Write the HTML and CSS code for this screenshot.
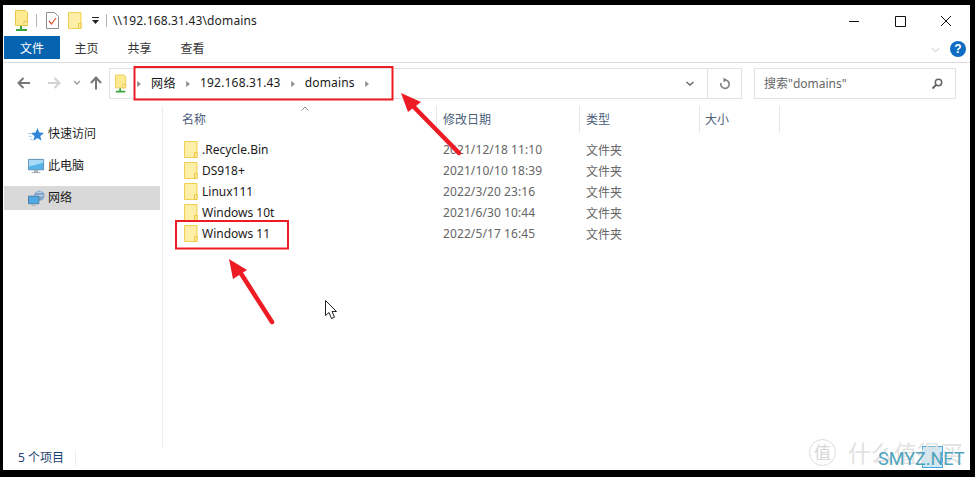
FILE: index.html
```html
<!DOCTYPE html>
<html lang="zh">
<head>
<meta charset="utf-8">
<title>domains</title>
<link rel="stylesheet" href="styles.css">
</head>
<body>
<svg width="0" height="0" class="defs">
  <defs>
    <symbol id="folder" viewBox="0 0 14 17">
      <path d="M.5.5h12.5v16H.5z" fill="#fde98f" stroke="#f0cf52"/>
      <path d="M1 1h11v15H1z" fill="#fdeea8"/>
      <path d="M10.5 16.5v-5h2.500v5z" fill="#fdeea8" stroke="#ecc63e"/>
    </symbol>
    <symbol id="netdrive" viewBox="0 0 14 22">
      <path d="M.5.5h10l2 2v13H.5z" fill="#fde98f" stroke="#e9c848"/>
      <path d="M9 11.500h3.500v4H9z" fill="#fdeea8" stroke="#e9c848"/>
      <path d="M6 16v3M1 20h11" stroke="#3aa53a" stroke-width="2" fill="none"/>
    </symbol>
    <symbol id="chev" viewBox="0 0 4 6">
      <path d="M.5.5L3.500 3 .5 5.500z" fill="#8a8a8a" stroke="#8a8a8a" stroke-width=".6"/>
    </symbol>
  </defs>
</svg>
<div class="window">
  <header class="titlebar">
    <svg class="qa-drive"><use href="#netdrive"/></svg>
    <span class="qa-sep"></span>
    <svg class="qa-prop" viewBox="0 0 13 17">
      <path d="M.5.500h8l4 4v12H.5z" fill="#fff" stroke="#8d8d8d"/>
      <path d="M3 9l2.500 3L10 6" fill="none" stroke="#d9532c" stroke-width="1.200"/>
    </svg>
    <svg class="qa-folder"><use href="#folder"/></svg>
    <svg class="qa-drop" viewBox="0 0 9 8"><path d="M1 .5h7" stroke="#222"/><path d="M1 3h7L4.500 7z" fill="#222"/></svg>
    <span class="qa-sep qa-sep-2"></span>
    <span class="title-text">\\192.168.31.43\domains</span>
    <span class="win-btns">
      <svg class="win-btn" viewBox="0 0 46 30"><path d="M18 15.500h10" stroke="#111"/></svg>
      <svg class="win-btn" viewBox="0 0 46 30"><path d="M18.500 10.500h10v10h-10z" stroke="#111" fill="none"/></svg>
      <svg class="win-btn" viewBox="0 0 46 30"><path d="M18 10l10 10M28 10L18 20" stroke="#111" fill="none"/></svg>
    </span>
  </header>

  <nav class="ribbon">
    <span class="tab tab-file">文件</span>
    <span class="tab">主页</span>
    <span class="tab">共享</span>
    <span class="tab">查看</span>
    <svg class="ribbon-chev" viewBox="0 0 10 6"><path d="M1 1l4 4 4-4" fill="none" stroke="#b8b8b8"/></svg>
    <span class="help">?</span>
  </nav>

  <div class="addressrow">
    <svg class="nav-arrow" viewBox="0 0 14 12"><path d="M13 6H2M6.500 1L1.500 6l5 5" fill="none" stroke="#777" stroke-width="2"/></svg>
    <svg class="nav-arrow nav-fwd" viewBox="0 0 14 12"><path d="M1 6h11M7.500 1l5 5-5 5" fill="none" stroke="#d2d2d2" stroke-width="2"/></svg>
    <svg class="nav-drop" viewBox="0 0 8 5"><path d="M1 1l3 3 3-3" fill="none" stroke="#9a9a9a" stroke-width="1.300"/></svg>
    <svg class="nav-up" viewBox="0 0 12 14"><path d="M6 13.500V2M1 7l5-5.500L11 7" fill="none" stroke="#777" stroke-width="2"/></svg>
    <div class="addressbar">
      <svg class="addr-drive"><use href="#netdrive"/></svg>
      <svg class="crumb-sep"><use href="#chev"/></svg>
      <span class="crumb crumb-cjk">网络</span>
      <svg class="crumb-sep"><use href="#chev"/></svg>
      <span class="crumb">192.168.31.43</span>
      <svg class="crumb-sep"><use href="#chev"/></svg>
      <span class="crumb">domains</span>
      <svg class="crumb-sep"><use href="#chev"/></svg>
      <span class="addr-spacer"></span>
      <svg class="addr-drop" viewBox="0 0 8 5"><path d="M.5 1l3.500 3 3.500-3" fill="none" stroke="#666" stroke-width="1.400"/></svg>
      <span class="addr-refresh">
        <svg class="refresh-icon" viewBox="0 0 12 13"><path d="M6 3a4.200 4.200 0 1 1-4 3" fill="none" stroke="#808080" stroke-width="1.600"/><path d="M4.500 .5L8 3 4.500 5.500z" fill="#808080"/></svg>
      </span>
    </div>
    <div class="searchbar">
      <span class="search-text">搜索"domains"</span>
      <svg class="search-icon" viewBox="0 0 12 12"><circle cx="7.500" cy="4.500" r="3.200" fill="none" stroke="#666" stroke-width="1.500"/><path d="M5 7l-3.500 3.500" stroke="#666" stroke-width="2"/></svg>
    </div>
  </div>

  <div class="main">
    <aside class="sidebar">
      <div class="side-item">
        <svg class="side-icon" viewBox="0 0 18 18"><path d="M10 2l2 5 5 .3-4 3.300 1.300 5L10 12.800 5.700 15.600 7 10.600 3 7.300l5-.3z" fill="#2f86d8"/><path d="M0 8h4M1 11h3M2 14h3" stroke="#9cc8ee"/></svg>
        <span class="side-label">快速访问</span>
      </div>
      <div class="side-item">
        <svg class="side-icon" viewBox="0 0 18 18"><path d="M.5 1.500h16v11H.5z" fill="#55b4ea" stroke="#5f8fb5"/><path d="M1 2h15v3L1 9z" fill="#a8dcf6"/><path d="M7 13h3v2H7zM4 15.500h9" stroke="#99a4ad" fill="#c5ccd2"/></svg>
        <span class="side-label">此电脑</span>
      </div>
      <div class="side-item side-active">
        <svg class="side-icon" viewBox="0 0 18 18"><circle cx="12" cy="6" r="5.500" fill="#7fa6c8"/><path d="M9 2q3 1 6 0M8 6h8" stroke="#dfe9f2" fill="none"/><path d="M.5 6.500h11v8H.5z" fill="#4ea9e4" stroke="#4d7ea6"/><path d="M4 15.500h4v1.500H4z" fill="#aab4bc"/></svg>
        <span class="side-label">网络</span>
      </div>
    </aside>

    <section class="files">
      <div class="file-head">
        <span class="col col-name">名称</span>
        <span class="col col-date">修改日期</span>
        <span class="col col-type">类型</span>
        <span class="col col-size">大小</span>
        <svg class="sort-caret" viewBox="0 0 8 5"><path d="M.5 4.500L4 1l3.500 3.500" fill="none" stroke="#8a8a8a"/></svg>
      </div>
      <div class="file-row">
        <span class="cell-name"><svg class="file-icon"><use href="#folder"/></svg>.Recycle.Bin</span>
        <span class="cell-date">2021/12/18 11:10</span>
        <span class="cell-type">文件夹</span>
      </div>
      <div class="file-row">
        <span class="cell-name"><svg class="file-icon"><use href="#folder"/></svg>DS918+</span>
        <span class="cell-date">2021/10/10 18:39</span>
        <span class="cell-type">文件夹</span>
      </div>
      <div class="file-row">
        <span class="cell-name"><svg class="file-icon"><use href="#folder"/></svg>Linux111</span>
        <span class="cell-date">2022/3/20 23:16</span>
        <span class="cell-type">文件夹</span>
      </div>
      <div class="file-row">
        <span class="cell-name"><svg class="file-icon"><use href="#folder"/></svg>Windows 10t</span>
        <span class="cell-date">2021/6/30 10:44</span>
        <span class="cell-type">文件夹</span>
      </div>
      <div class="file-row">
        <span class="cell-name"><svg class="file-icon"><use href="#folder"/></svg>Windows 11</span>
        <span class="cell-date">2022/5/17 16:45</span>
        <span class="cell-type">文件夹</span>
      </div>
    </section>
  </div>

  <footer class="statusbar"><span class="status-text">5 个项目</span></footer>
</div>

<svg class="annotations" viewBox="0 0 975 477">
  <rect x="134.500" y="67" width="258" height="32.500" fill="none" stroke="#ed1c24" stroke-width="2"/>
  <rect x="176" y="221" width="112" height="27.500" fill="none" stroke="#ed1c24" stroke-width="2"/>
  <path d="M459 153L411 104" stroke="#ed1c24" stroke-width="4.500" stroke-linecap="round"/>
  <path d="M401 93L421 102 408 112z" fill="#ed1c24"/>
  <path d="M272 322L240 272" stroke="#ed1c24" stroke-width="4.500" stroke-linecap="round"/>
  <path d="M229 259L247 270 233 279z" fill="#ed1c24"/>
  <path d="M325.500 300.500v15l3.500-3 2.500 6 3-1.300-2.500-5.700h4.500z" fill="#fff" stroke="#222"/>
</svg>

<div class="watermark">
  <span class="wm-select"></span>
  <span class="wm-circle">值</span>
  <span class="wm-cn">什么值得买</span>
  <span class="wm-en">SMYZ.NET</span>
</div>
</body>
</html>
```

FILE: styles.css
```css
* { box-sizing: border-box; }
html, body { margin: 0; padding: 0; width: 975px; height: 477px; overflow: hidden; background: #000; }
body {
  position: relative;
  padding: 5px 5px 7px 3px;
  font-family: "Noto Sans", "Noto Sans CJK SC", sans-serif;
  font-size: 12px;
  color: #1a1a1a;
}
.defs { position: absolute; }
.window { width: 967px; height: 465px; background: #fff; display: flex; flex-direction: column; }

.titlebar { height: 31px; display: flex; align-items: center; padding-left: 12px; flex: none; }
.qa-drive { width: 14px; height: 22px; }
.qa-sep { width: 1px; height: 13px; background: #b5b5b5; margin-left: 7px; }
.qa-prop { width: 13px; height: 17px; margin-left: 9px; }
.qa-folder { width: 14px; height: 17px; margin-left: 9px; }
.qa-drop { width: 9px; height: 8px; margin-left: 9px; }
.qa-sep-2 { margin-left: 6px; }
.title-text { margin-left: 6px; font-size: 12px; color: #222; letter-spacing: .15px; }
.win-btns { margin-left: auto; display: flex; margin-right: 1px; }
.win-btn { width: 46px; height: 30px; }

.ribbon { flex: none; display: flex; align-items: flex-start; padding-left: 1px; border-bottom: 1px solid #dcdcdc; height: 27px; }
.tab { width: 53px; height: 23px; display: flex; align-items: center; justify-content: center; color: #333; }
.tab-file { width: 56px; background: #0563af; color: #fff; }
.ribbon-chev { width: 9px; height: 6px; margin: 11px 0 0 auto; }
.help { width: 16px; height: 16px; border-radius: 50%; background: #0f6cc4; color: #fff; font-weight: 700; font-size: 12px; line-height: 16px; text-align: center; margin: 5px 4px 0 10px; font-family: "Liberation Sans", sans-serif; }

.addressrow { height: 43px; flex: none; display: flex; align-items: flex-start; padding-top: 5px; }
.nav-arrow { width: 14px; height: 12px; margin: 9px 0 0 14px; flex: none; }
.nav-fwd { margin-left: 16px; }
.nav-drop { width: 8px; height: 5px; margin: 12px 0 0 12px; flex: none; }
.nav-up { width: 12px; height: 14px; margin: 8px 0 0 9px; flex: none; }
.addressbar { width: 633px; height: 31px; margin-left: 7px; border: 1px solid #e1e1e1; display: flex; align-items: center; padding-left: 5px; flex: none; }
.addr-drive { width: 12px; height: 20px; flex: none; }
.crumb { color: #1a1a1a; letter-spacing: .18px; margin-bottom: 2px; }
.crumb-cjk { letter-spacing: .5px; }
.crumb-sep { width: 4px; height: 6px; margin: 0 10px; flex: none; }
.addr-spacer { flex: 1; }
.addr-drop { width: 8px; height: 5px; margin-right: 13px; }
.addr-refresh { width: 34px; height: 29px; border-left: 1px solid #e1e1e1; display: flex; align-items: center; justify-content: center; }
.refresh-icon { width: 12px; height: 13px; }
.searchbar { width: 202px; height: 31px; margin-left: 12px; border: 1px solid #e1e1e1; display: flex; align-items: center; padding: 0 12px 0 9px; justify-content: space-between; flex: none; }
.search-text { color: #666; margin-bottom: 2px; }
.search-icon { width: 12px; height: 12px; }

.main { flex: 1; display: flex; min-height: 0; }
.sidebar { width: 159px; flex: none; padding-top: 16px; display: flex; flex-direction: column; gap: 8px; padding-left: 1px; }
.side-item { height: 24px; display: flex; align-items: center; padding-left: 24px; gap: 3px; color: #1a1a1a; width: 156px; }
.side-label { margin-bottom: 2px; }
.side-icon { width: 17px; height: 17px; flex: none; }
.side-active { background: #d9d9d9; }
.files { flex: 1; border-left: 1px solid #ededed; display: flex; flex-direction: column; }

.file-head { height: 27px; display: flex; position: relative; flex: none; margin-bottom: 6px; }
.col { height: 100%; display: flex; align-items: center; color: #4c607a; padding: 0 0 2px 6px; border-right: 1px solid #e8e8e8; }
.col-name { width: 274px; padding-left: 19px; }
.col-date { width: 143px; }
.col-type { width: 120px; }
.col-size { width: 80px; padding-left: 5px; }
.sort-caret { position: absolute; left: 138px; top: 0; width: 8px; height: 5px; }

.file-row { height: 21px; display: flex; align-items: center; flex: none; color: #666; }
.cell-name { width: 280px; padding-left: 21px; display: flex; align-items: center; color: #1a1a1a; }
.file-icon { width: 14px; height: 17px; margin-right: 4px; flex: none; }
.cell-date { width: 143px; letter-spacing: .1px; }
.cell-type { width: 100px; }

.statusbar { height: 23px; flex: none; display: flex; align-items: center; padding: 0 0 2px 15px; }
.status-text { color: #1c3f6e; padding-right: 11px; border-right: 1px solid #eee; line-height: 16px; }

.annotations { position: absolute; left: 0; top: 0; width: 975px; height: 477px; pointer-events: none; }

.wm-select { position: absolute; left: 922px; top: 446px; width: 21px; height: 22px; background: #cfe8f5; border: 1px solid #4aa6d8; }
.wm-circle { position: absolute; left: 809px; top: 439px; width: 27px; height: 27px; border: 1px solid #dcdcdc; border-radius: 50%; color: #d6d6d6; font-size: 17px; line-height: 24px; text-align: center; font-family: "Noto Sans CJK SC", sans-serif; }
.wm-cn { position: absolute; left: 848px; top: 437px; color: #e2e2e2; font-size: 23px; line-height: 30px; white-space: nowrap; font-family: "Noto Sans CJK SC", sans-serif; }
.wm-en { position: absolute; left: 878px; top: 446px; color: #4fa3bd; font-size: 18px; line-height: 26px; white-space: nowrap; font-family: "Roboto", sans-serif; }
```
